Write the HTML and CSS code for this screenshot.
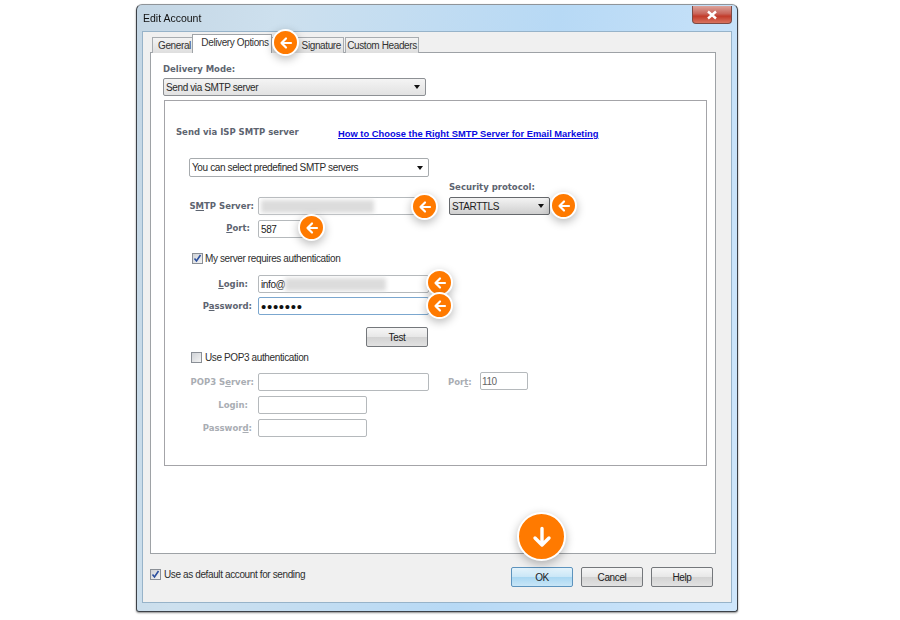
FILE: index.html
```html
<!DOCTYPE html>
<html lang="en">
<head>
<meta charset="utf-8">
<title>Edit Account</title>
<link rel="stylesheet" href="styles.css">
</head>
<body>
<div class="dialog">
  <div class="titlebar">
    <span class="title">Edit Account</span>
    <span class="close"><svg width="12" height="10" viewBox="0 0 12 10"><path d="M2 1.5l8 7M10 1.5l-8 7" stroke="#fff" stroke-width="2.4" fill="none"/></svg></span>
  </div>
  <div class="client">
    <div class="tabs">
      <span class="tab tab-general">General</span>
      <span class="tab tab-active">Delivery Options</span>
      <span class="tab tab-sign">Signature</span>
      <span class="tab tab-custom">Custom Headers</span>
    </div>
    <div class="pane">
      <div class="heading mode-label">Delivery Mode:</div>
      <div class="select select-mode">Send via SMTP server<i class="caret"></i></div>
      <div class="box">
        <div class="box-head">
          <span class="heading">Send via ISP SMTP server</span>
          <a class="link" href="#">How to Choose the Right SMTP Server for Email Marketing</a>
        </div>
        <div class="select select-predef">You can select predefined SMTP servers<i class="caret"></i></div>
        <div class="row row-smtp">
          <div class="heading lbl lbl-long">S<u>M</u>TP Server:</div>
          <div class="input input-smtp"><span class="blur blur-smtp"></span></div>
          <div class="security">
            <div class="heading sec-label">Security protocol:</div>
            <div class="btn-select">STARTTLS<i class="caret"></i></div>
          </div>
        </div>
        <div class="row row-port">
          <div class="heading lbl lbl-port"><u>P</u>ort:</div>
          <div class="input input-port">587</div>
        </div>
        <label class="check check-auth"><i class="box-check on"><svg width="9" height="9" viewBox="0 0 9 9"><path d="M1.5 4.5l2 2.5 4-6" stroke="#2b4f9e" stroke-width="1.6" fill="none"/></svg></i>My server requires authentication</label>
        <div class="row row-login">
          <div class="heading lbl lbl-login"><u>L</u>ogin:</div>
          <div class="input input-wide">info@<span class="blur blur-login"></span></div>
        </div>
        <div class="row row-pass">
          <div class="heading lbl lbl-pass">P<u>a</u>ssword:</div>
          <div class="input input-wide input-focus"><span class="dots">•••••••</span></div>
        </div>
        <div class="test-row"><span class="btn btn-test">Test</span></div>
        <label class="check check-pop"><i class="box-check"></i>Use POP3 authentication</label>
        <div class="row row-pop">
          <div class="heading lbl lbl-long muted">POP3 S<u>e</u>rver:</div>
          <div class="input input-wide"></div>
          <div class="heading muted port-lbl">Por<u>t</u>:</div>
          <div class="input input-popport">110</div>
        </div>
        <div class="row row-pl">
          <div class="heading lbl lbl-login muted">Login:</div>
          <div class="input input-mid"></div>
        </div>
        <div class="row row-pp">
          <div class="heading lbl lbl-pass muted">Passwor<u>d</u>:</div>
          <div class="input input-mid"></div>
        </div>
      </div>
    </div>
    <div class="footer">
      <label class="check check-default"><i class="box-check on"><svg width="9" height="9" viewBox="0 0 9 9"><path d="M1.5 4.5l2 2.5 4-6" stroke="#2b4f9e" stroke-width="1.6" fill="none"/></svg></i>Use as default account for sending</label>
      <div class="buttons">
        <span class="btn btn-ok">OK</span>
        <span class="btn">Cancel</span>
        <span class="btn">Help</span>
      </div>
    </div>
  </div>
</div>

<span class="mark m-tab"><svg viewBox="0 0 14 14"><path d="M12 7H2.500M7 2.500L2.500 7 7 11.500" /></svg></span>
<span class="mark m-smtp"><svg viewBox="0 0 14 14"><path d="M12 7H2.500M7 2.500L2.500 7 7 11.500" /></svg></span>
<span class="mark m-port"><svg viewBox="0 0 14 14"><path d="M12 7H2.500M7 2.500L2.500 7 7 11.500" /></svg></span>
<span class="mark m-sec"><svg viewBox="0 0 14 14"><path d="M12 7H2.500M7 2.500L2.500 7 7 11.500" /></svg></span>
<span class="mark m-login"><svg viewBox="0 0 14 14"><path d="M12 7H2.500M7 2.500L2.500 7 7 11.500" /></svg></span>
<span class="mark m-pass"><svg viewBox="0 0 14 14"><path d="M12 7H2.500M7 2.500L2.500 7 7 11.500" /></svg></span>
<span class="mark mark-big"><svg viewBox="0 0 24 24"><path d="M12 3.500v16M5 13l7 7 7-7" /></svg></span>
</body>
</html>
```

FILE: styles.css
```css
* { box-sizing: border-box; }
html, body { margin: 0; padding: 0; background: #fff; }
body {
  width: 900px;
  height: 620px;
  overflow: hidden;
  position: relative;
  padding: 4px 0 0 136px;
  font-family: "Liberation Sans", Arial, sans-serif;
  font-size: 10px;
  letter-spacing: -.38px;
  color: #222;
}
.dialog {
  width: 602px;
  height: 608px;
  border: 1px solid #3c4148;
  border-top-color: #8f9499;
  border-radius: 6px 6px 3px 3px;
  background: linear-gradient(100deg, #c4d6e4 0%, #cde0ee 20%, #b7d9f5 60%, #cfe6fb 100%);
  box-shadow: 0 1px 2px rgba(0,0,0,.45);
  padding: 0 5px 8px;
  display: flex;
  flex-direction: column;
  filter: blur(.4px);
}
.titlebar {
  height: 26px;
  flex: none;
  display: flex;
  justify-content: space-between;
  align-items: flex-start;
}
.title { font-size: 10.500px; letter-spacing: 0; color: #111; margin: 7px 0 0 1px; }
.close {
  width: 40px;
  height: 18px;
  margin-top: 1px;
  border: 1px solid #7d4a44;
  border-top: 0;
  border-radius: 0 0 4px 4px;
  background: linear-gradient(#dca39b 0%, #c9655a 45%, #c23b2a 60%, #d8735f 100%);
  display: flex;
  align-items: center;
  justify-content: center;
}
.client {
  flex: 1;
  background: #f0f0f0;
  border: 1px solid #97b3c9;
  padding: 1px 15px 0 7px;
  display: flex;
  flex-direction: column;
}
.tabs {
  height: 19px;
  flex: none;
  display: flex;
  align-items: flex-end;
  position: relative;
  z-index: 1;
  padding-left: 2px;
}
.tab {
  height: 16px;
  margin-bottom: -1px;
  border: 1px solid #a8acb0;
  border-bottom: 0;
  background: linear-gradient(#f4f4f4, #dedede);
  display: flex;
  align-items: center;
  justify-content: center;
  color: #333;
  white-space: nowrap;
}
.tab-general { width: 41px; margin-right: -1px; padding-left: 4px; }
.tab-active {
  width: 80px;
  height: 19px;
  background: #fff;
  border-color: #a0a4a8;
  padding: 0 0 3px 6px;
  position: relative;
  z-index: 1;
}
.tab-sign { width: 73px; margin-left: -1px; justify-content: flex-end; padding-right: 2px; }
.tab-custom { width: 74px; margin-left: 1px; }
.pane {
  height: 502px;
  flex: none;
  background: #fff;
  border: 1px solid #9ea2a6;
  padding: 10px 8px 0 12px;
  display: flex;
  flex-direction: column;
}
.heading {
  font-family: "DejaVu Sans", Verdana, sans-serif;
  font-weight: 700;
  font-size: 8.500px;
  letter-spacing: 0;
  color: #5d6470;
  white-space: nowrap;
}
.muted { color: #a9adb3; }
.mode-label { height: 15px; line-height: 13px; }
.select {
  display: flex;
  align-items: center;
  justify-content: space-between;
  border: 1px solid #a7abae;
  border-radius: 2px;
  background: #fff;
  padding: 0 5px 0 2px;
  color: #2a2a2a;
}
.select-mode {
  width: 263px;
  height: 18px;
  flex: none;
  background: linear-gradient(#f4f4f4, #e2e2e2);
  border-color: #8d9094;
  margin-bottom: 4px;
}
.caret {
  width: 0;
  height: 0;
  border: 3.500px solid transparent;
  border-top: 4px solid #111;
  border-bottom: 0;
  flex: none;
}
.box {
  width: 543px;
  height: 366px;
  flex: none;
  margin-left: 1px;
  border: 1px solid #a4a4a8;
  border-width: 1px 1.500px 1.500px 1px;
  padding: 0 0 0 24px;
  display: flex;
  flex-direction: column;
}
.box-head {
  height: 57px;
  flex: none;
  display: flex;
  align-items: flex-end;
  padding: 0 0 21px 0;
  margin-left: -13px;
}
.box-head .heading { width: 162px; }
.link {
  color: #0a0ae0;
  font-weight: 700;
  font-size: 9.350px;
  letter-spacing: 0;
  white-space: nowrap;
  text-decoration: underline;
  margin-bottom: -2px;
}
.select-predef { width: 240px; height: 19px; flex: none; margin-bottom: 20px; }
.row { display: flex; align-items: center; flex: none; margin-left: -25px; }
.lbl { width: 92px; text-align: right; flex: none; margin-right: 2px; }
.lbl-long { padding-right: 2px; }
.lbl-port { padding-right: 6px; margin-bottom: 2px; }
.lbl-login { padding-right: 8px; }
.lbl-pass { padding-right: 4px; }
.input {
  height: 18px;
  border: 1px solid #b5b9bc;
  border-radius: 2px;
  background: #fff;
  padding-left: 2px;
  display: flex;
  align-items: center;
  color: #222;
  position: relative;
}
.row-smtp { height: 18px; margin-bottom: 5px; position: relative; }
.input-smtp { width: 171px; }
.blur {
  display: block;
  height: 13px;
  background: #dcdcdc;
  filter: blur(2px);
}
.blur-smtp { width: 113px; }
.blur-login { width: 101px; }
.security { position: absolute; left: 285px; top: -18px; }
.sec-label { height: 18px; line-height: 17px; }
.btn-select {
  width: 101px;
  height: 18px;
  border: 1px solid #65686c;
  border-radius: 2px;
  background: linear-gradient(#f3f3f3, #cfcfcf);
  padding: 0 5px 0 2px;
  display: flex;
  align-items: center;
  justify-content: space-between;
  color: #222;
  letter-spacing: -.4px;
}
.row-port { height: 18px; }
.input-port { width: 46px; }
.check { display: flex; align-items: center; flex: none; color: #2e2e2e; white-space: nowrap; }
.box-check {
  width: 11px;
  height: 11px;
  margin-right: 3px;
  border: 1px solid #8a8f96;
  background: linear-gradient(135deg, #cfd2d6, #f4f4f4);
  display: flex;
  align-items: center;
  justify-content: center;
  flex: none;
}
.check-auth { height: 12px; margin: 14px 0 11px 3px; }
.check-auth .box-check { margin-right: 2px; }
.check-pop { height: 12px; margin: 4px 0 10px 2px; }
.row-login { height: 18px; margin-bottom: 4px; }
.row-pass { height: 18px; }
.input-wide { width: 171px; }
.input-focus { border-color: #7ba7cf; }
.dots { font-size: 15px; line-height: 1; letter-spacing: .7px; color: #111; }
.test-row { height: 20px; flex: none; margin: 12px 0 0 177px; display: flex; }
.btn {
  width: 62px;
  height: 20px;
  border: 1px solid #74777b;
  border-radius: 2px;
  background: linear-gradient(#f6f6f6 0%, #e8e8e8 48%, #d3d3d3 52%, #e2e2e2 100%);
  display: flex;
  align-items: center;
  justify-content: center;
  color: #222;
}
.row-pop { height: 18px; margin-bottom: 5px; }
.port-lbl { margin-left: 19px; width: 32px; }
.input-popport { width: 48px; color: #666; margin-top: -2px; padding-left: 1px; }
.input-mid { width: 109px; }
.row-pl { height: 18px; margin-bottom: 5px; }
.row-pp { height: 18px; }
.footer {
  flex: 1;
  display: flex;
  justify-content: space-between;
  align-items: flex-start;
  padding-top: 13px;
}
.check-default { height: 12px; margin-top: 1px; }
.buttons { display: flex; gap: 8px; padding-right: 3px; }
.btn-ok {
  border-color: #5d93bd;
  background: linear-gradient(#e4f3fb 0%, #cbe7f7 48%, #a9d7f2 52%, #c9e6f7 100%);
}
.mark {
  position: absolute;
  width: 27px;
  height: 27px;
  border-radius: 50%;
  background: #ff7a00;
  border: 2px solid #fff;
  box-shadow: 0 3px 10px rgba(0,0,0,.28);
  display: flex;
  align-items: center;
  justify-content: center;
  filter: blur(.3px);
}
.mark svg {
  width: 14px;
  height: 14px;
  fill: none;
  stroke: #fff;
  stroke-width: 2.200;
  stroke-linecap: round;
  stroke-linejoin: round;
}
.m-tab { left: 272px; top: 29px; }
.m-smtp { left: 411px; top: 193px; }
.m-port { left: 298px; top: 214px; }
.m-sec { left: 550px; top: 192px; }
.m-login { left: 426px; top: 269px; }
.m-pass { left: 426px; top: 292px; }
.mark-big { width: 49px; height: 49px; left: 517px; top: 512px; }
.mark-big svg { width: 24px; height: 24px; stroke-width: 3.400; }
```
